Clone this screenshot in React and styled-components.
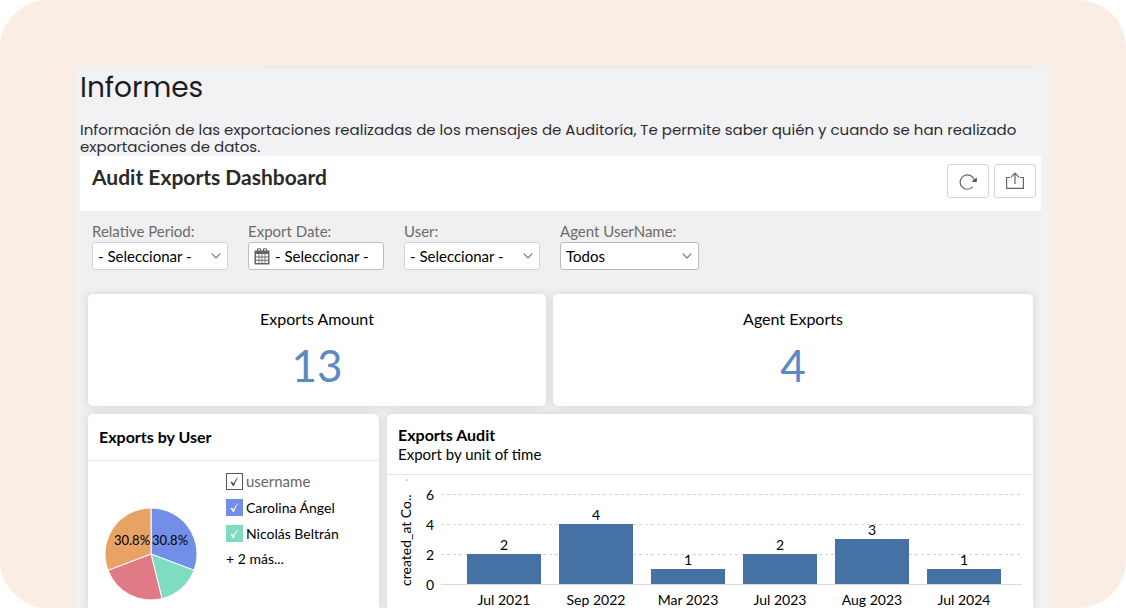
import styled, { createGlobalStyle } from "styled-components";

const BARS = [
  { label: "Jul 2021", value: 2 },
  { label: "Sep 2022", value: 4 },
  { label: "Mar 2023", value: 1 },
  { label: "Jul 2023", value: 2 },
  { label: "Aug 2023", value: 3 },
  { label: "Jul 2024", value: 1 },
];

const SLICES = [
  { count: 4, color: "#718fe6" },
  { count: 2, color: "#80dcc1" },
  { count: 3, color: "#e07a85" },
  { count: 4, color: "#e8a264" },
];

function Chevron() {
  return (
    <ChevronIcon width="10" height="6" viewBox="0 0 10 6" aria-hidden="true">
      <path d="M0.7 0.7 5 5 9.3 0.7" fill="none" stroke="#777" strokeWidth="1.2" />
    </ChevronIcon>
  );
}

function SelectFilter({ id, label, value, wide }) {
  return (
    <Filter>
      <FilterLabel htmlFor={id}>{label}</FilterLabel>
      <SelectBox $wide={wide}>
        <Select id={id} $strong={wide}>
          <option>{value}</option>
        </Select>
        <Chevron />
      </SelectBox>
    </Filter>
  );
}

function LegendItem({ children, color }) {
  return (
    <LegendRow $muted={!color}>
      <CheckWrap>
        <Check type="checkbox" defaultChecked $color={color} />
        <svg width="17" height="17" viewBox="0 0 17 17" aria-hidden="true">
          <path
            d="M4.6 9.2 6 8.6 7.4 10.8Q8.8 7 11.6 4.4L12 4.8Q9.4 8.4 8 13H7Z"
            fill={color ? "#fff" : "#444"}
          />
        </svg>
      </CheckWrap>
      {children}
    </LegendRow>
  );
}

function PieChart() {
  const total = SLICES.reduce((sum, s) => sum + s.count, 0);
  const point = (n) => {
    const a = (n / total) * Math.PI * 2;
    return `${47 + 46 * Math.sin(a)} ${47 - 46 * Math.cos(a)}`;
  };
  let start = 0;
  return (
    <Pie width="94" height="94" viewBox="0 0 94 94" role="img">
      {SLICES.map((s, i) => {
        const from = start;
        start += s.count;
        return (
          <path
            key={i}
            d={`M47 47L${point(from)}A46 46 0 0 1 ${point(start)}Z`}
            fill={s.color}
            stroke="#fff"
            strokeWidth="1"
          />
        );
      })}
      <text x="28" y="38">30.8%</text>
      <text x="66" y="38">30.8%</text>
    </Pie>
  );
}

function BarChart() {
  return (
    <Bars viewBox="0 0 646 132" role="img">
      {[0, 2, 4, 6].map((n) => (
        <g key={n}>
          <line
            x1="54"
            x2="635"
            y1={109.5 - n * 15}
            y2={109.5 - n * 15}
            stroke={n ? "#d2d2d2" : "#d8d8d8"}
            strokeDasharray={n ? "3 3" : undefined}
          />
          <text x="43" y={115 - n * 15} textAnchor="middle">{n}</text>
        </g>
      ))}
      <text transform="translate(24 111) rotate(-90)">created_at Co..</text>
      <circle cx="20" cy="5" r="0.6" fill="#555" />
      {BARS.map((b, i) => (
        <g key={b.label}>
          <rect x={80 + i * 92} y={109 - b.value * 15} width="74" height={b.value * 15} fill="#4571a5" />
          <text x={117 + i * 92} y={105 - b.value * 15} textAnchor="middle">{b.value}</text>
          <text x={117 + i * 92} y="130" textAnchor="middle">{b.label}</text>
        </g>
      ))}
    </Bars>
  );
}

function App() {
  return (
    <Frame>
      <GlobalStyle />
      <Page>
        <TopEdge />
        <PageTitle>Informes</PageTitle>
        <Intro>
          Información de las exportaciones realizadas de los mensajes de Auditoría, Te permite
          saber quién y cuando se han realizado exportaciones de datos.
        </Intro>
        <Dashboard>
          <Header>
            <DashboardTitle>Audit Exports Dashboard</DashboardTitle>
            <Actions>
              <IconButton aria-label="Refresh">
                <svg width="20" height="18" viewBox="0 0 20 18" fill="none" stroke="#666">
                  <path d="M16.4 8.5A7.2 7.2 0 1 0 14.8 14.8" strokeWidth="1.2" />
                  <path d="M18.8 5.2V10H13.6Z" fill="#555" stroke="none" />
                </svg>
              </IconButton>
              <IconButton aria-label="Export">
                <svg width="20" height="18" viewBox="0 0 20 18" fill="none" stroke="#666" strokeWidth="1.2">
                  <path d="M5 5.5H1.6V16.4H18.4V5.5H15" />
                  <path d="M10 12V1.4M5.8 5.4 10 1.2 14.2 5.4" />
                </svg>
              </IconButton>
            </Actions>
          </Header>
          <Filters>
            <SelectFilter id="period" label="Relative Period:" value="- Seleccionar -" />
            <Filter>
              <FilterLabel htmlFor="date">Export Date:</FilterLabel>
              <DateButton id="date">
                <svg width="16" height="17" viewBox="0 0 16 17" aria-hidden="true">
                  <path d="M0.5 2.5H15.5V16.5H0.5Z" fill="#666" />
                  <path d="M3.5 3V0.8H6.5V3M9.5 3V0.8H12.5V3" fill="none" stroke="#666" />
                  <path
                    d="M2 6h2.6v2.4H2zM5.4 6h2.2v2.4H5.4zM8.4 6h2.2v2.4H8.4zM11.4 6h2.6v2.4h-2.6zM2 9.4h2.6v2.4H2zM5.4 9.4h2.2v2.4H5.4zM8.4 9.4h2.2v2.4H8.4zM11.4 9.4h2.6v2.4h-2.6zM2 12.8h2.6V15H2zM5.4 12.8h2.2V15H5.4zM8.4 12.8h2.2V15H8.4zM11.4 12.8h2.6V15h-2.6z"
                    fill="#fff"
                  />
                </svg>
                - Seleccionar -
              </DateButton>
            </Filter>
            <SelectFilter id="user" label="User:" value="- Seleccionar -" />
            <SelectFilter id="agent" label="Agent UserName:" value="Todos" wide />
          </Filters>
          <Totals>
            <StatCard>
              <StatLabel>Exports Amount</StatLabel>
              <StatValue>13</StatValue>
            </StatCard>
            <StatCard>
              <StatLabel>Agent Exports</StatLabel>
              <StatValue>4</StatValue>
            </StatCard>
          </Totals>
          <Charts>
            <Card>
              <CardHeader>
                <CardTitle>Exports by User</CardTitle>
              </CardHeader>
              <PieArea>
                <PieChart />
                <Legend>
                  <LegendItem>username</LegendItem>
                  <LegendItem color="#718fe6">Carolina Ángel</LegendItem>
                  <LegendItem color="#80dcc1">Nicolás Beltrán</LegendItem>
                  <More>+ 2 más...</More>
                </Legend>
              </PieArea>
            </Card>
            <Card>
              <CardHeader $tall>
                <CardTitle>Exports Audit</CardTitle>
                <CardSubtitle>Export by unit of time</CardSubtitle>
              </CardHeader>
              <BarChart />
            </Card>
          </Charts>
        </Dashboard>
      </Page>
    </Frame>
  );
}

const GlobalStyle = createGlobalStyle`
  * {
    box-sizing: border-box;
  }
  body {
    margin: 0;
    background: #ffffff;
    color: #000000;
    font-family: Lato, "Liberation Sans", sans-serif;
  }
  h1, h2, h3, p {
    margin: 0;
  }
  button, select {
    font-family: inherit;
    color: inherit;
  }
`;

const Frame = styled.div`
  display: flex;
  min-height: 100vh;
  padding: 66px 76px 0 75px;
  background: #faede4;
  border-radius: 48px;
  overflow: hidden;
`;

const Page = styled.main`
  display: flex;
  flex-direction: column;
  flex: 1;
  min-width: 0;
  padding: 0 9px 0 5px;
  background: #f2f2f4;
`;

const TopEdge = styled.div`
  height: 4px;
  margin: 0 9px 0 185px;
  background: linear-gradient(#e6e6ec, #f2f2f4);
`;

const PageTitle = styled.h1`
  font-family: Poppins, Inter, sans-serif;
  font-size: 28px;
  font-weight: 400;
  line-height: 36px;
  color: #1d1d21;
`;

const Intro = styled.p`
  margin-top: 15px;
  padding-bottom: 1px;
  font-family: Poppins, Inter, sans-serif;
  font-size: 15px;
  line-height: 17px;
  color: #2d2d32;
`;

const Dashboard = styled.section`
  display: flex;
  flex-direction: column;
  flex: 1;
  background: #f0f0f0;
`;

const Header = styled.header`
  display: flex;
  justify-content: space-between;
  align-items: flex-start;
  height: 55px;
  padding: 8px 5px 0 12px;
  background: #ffffff;
`;

const DashboardTitle = styled.h2`
  font-size: 21px;
  font-weight: 700;
  line-height: 26px;
  color: #2a2a2a;
`;

const Actions = styled.div`
  display: flex;
  gap: 5px;
`;

const IconButton = styled.button`
  display: flex;
  align-items: center;
  justify-content: center;
  width: 42px;
  height: 34px;
  padding: 0;
  background: #ffffff;
  border: 1px solid #d5d3e6;
  border-radius: 3px;
`;

const Filters = styled.div`
  display: flex;
  gap: 20px;
  padding: 10px 12px 24px;
`;

const Filter = styled.div`
  display: flex;
  flex-direction: column;
`;

const FilterLabel = styled.label`
  font-size: 15px;
  line-height: 20px;
  margin-bottom: 1px;
  color: #6b6b6b;
`;

const SelectBox = styled.div`
  position: relative;
  width: ${(props) => (props.$wide ? "139px" : "136px")};
`;

const Select = styled.select`
  appearance: none;
  display: block;
  width: 100%;
  height: 28px;
  padding: 0 20px 0 5px;
  font-size: 15px;
  background: #ffffff;
  border: 1px solid ${(props) => (props.$strong ? "#b9b9c3" : "#d3d3d3")};
  border-radius: 3px;
`;

const ChevronIcon = styled.svg`
  position: absolute;
  right: 7px;
  top: 11px;
  pointer-events: none;
`;

const DateButton = styled.button`
  display: flex;
  align-items: center;
  gap: 5px;
  width: 136px;
  height: 28px;
  padding: 0 5px;
  font-size: 15px;
  white-space: nowrap;
  background: #ffffff;
  border: 1px solid #bdbdc4;
  border-radius: 3px;
`;

const Totals = styled.div`
  display: grid;
  grid-template-columns: 458fr 480fr;
  gap: 7px;
  padding: 0 8px;
`;

const Charts = styled.div`
  display: grid;
  grid-template-columns: 291fr 646fr;
  flex: 1;
  gap: 8px;
  padding: 8px 8px 0;
`;

const Card = styled.article`
  min-width: 0;
  background: #ffffff;
  border-radius: 5px 5px 0 0;
  box-shadow: 0 0 8px rgba(0, 0, 0, 0.12);
`;

const StatCard = styled(Card)`
  height: 112px;
  padding-top: 14px;
  border-radius: 5px;
  text-align: center;
`;

const StatLabel = styled.h3`
  font-size: 16px;
  font-weight: 400;
  line-height: 22px;
`;

const StatValue = styled.p`
  margin-top: 8px;
  font-size: 44px;
  line-height: 54px;
  color: #5b8ac4;
`;

const CardHeader = styled.div`
  display: flex;
  flex-direction: column;
  justify-content: center;
  height: ${(props) => (props.$tall ? "61px" : "47px")};
  padding: 0 11px;
  border-bottom: 1px solid #e6e6e6;
`;

const CardTitle = styled.h3`
  font-size: 16px;
  font-weight: 700;
  line-height: 20px;
`;

const CardSubtitle = styled.p`
  font-size: 15px;
  line-height: 18px;
`;

const PieArea = styled.div`
  display: flex;
  gap: 28px;
  padding: 7px 0 0 16px;
`;

const Pie = styled.svg`
  flex: none;
  margin-top: 39px;
  font-size: 13px;
  text-anchor: middle;
`;

const Legend = styled.div`
  display: flex;
  flex-direction: column;
`;

const LegendRow = styled.label`
  display: flex;
  align-items: center;
  gap: 3px;
  height: 26px;
  font-size: ${(props) => (props.$muted ? "15px" : "14px")};
  color: ${(props) => (props.$muted ? "#666666" : "#000000")};
`;

const CheckWrap = styled.span`
  display: grid;
  svg {
    grid-area: 1 / 1;
    pointer-events: none;
  }
`;

const Check = styled.input`
  grid-area: 1 / 1;
  appearance: none;
  width: 17px;
  height: 17px;
  margin: 0;
  background: ${(props) => props.$color || "#ffffff"};
  border: 1px solid ${(props) => props.$color || "#555555"};
`;

const More = styled.p`
  font-size: 14px;
  line-height: 26px;
`;

const Bars = styled.svg`
  display: block;
  width: 100%;
  font-size: 14px;
`;

export default App;
